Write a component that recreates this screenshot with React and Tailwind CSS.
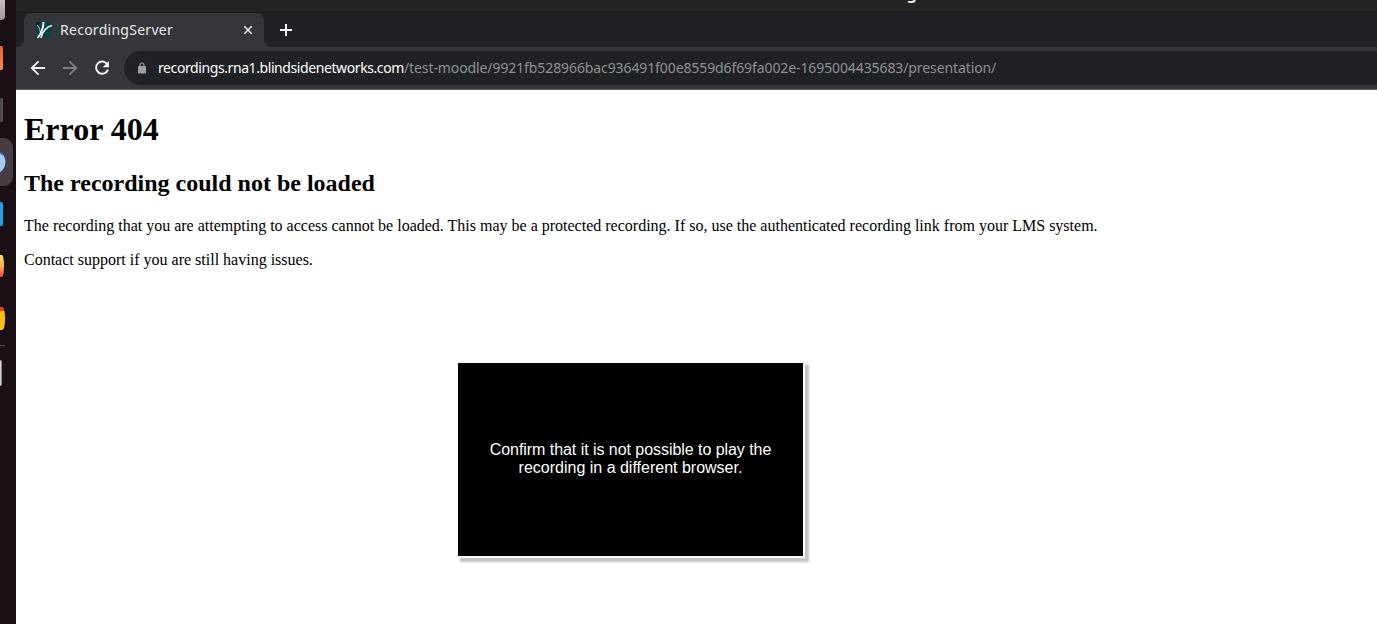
import React from 'react';

const dockItems = [
  { id: 'files', slot: 'h-[32px] items-start', icon: 'h-[20px] w-[5px] rounded-br-[4px] bg-gradient-to-b from-[#c4c0c2] to-[#9b989b]' },
  { id: 'software', slot: 'h-[52px] items-center', icon: 'h-[24px] w-[3px] rounded-r-[2px] bg-gradient-to-b from-[#e8622c] to-[#f58a55]' },
  { id: 'terminal', slot: 'h-[52px] items-center', icon: 'h-[24px] w-[3px] rounded-r-[2px] bg-[#484848] border-r border-[#5c5c5c]' },
  { id: 'browser', active: true },
  { id: 'editor', slot: 'h-[52px] items-center', icon: 'h-[24px] w-[3px] rounded-r-[2px] bg-[#22a0ec]' },
  { id: 'firefox', slot: 'h-[52px] items-center', icon: 'h-[22px] w-[4px] rounded-r-[100%] bg-gradient-to-b from-[#fbe04e] via-[#fdb04a] to-[#f0384f]' },
  { id: 'chrome', slot: 'h-[52px] items-center', icon: 'h-[23px] w-[5px] rounded-r-[100%] bg-[linear-gradient(#e53935_0_4px,#fdc00f_4px)]' },
];

const Dock = () => (
  <aside className="w-4 shrink-0 bg-[#1b0f16]">
    {dockItems.map((item) =>
      item.active ? (
        <div key={item.id} className="flex h-[52px] items-center">
          <div className="flex h-[48px] w-[13px] items-center rounded-r-[9px] bg-[#453d43]">
            <svg width="6" height="24" viewBox="0 0 6 24">
              <circle cx="-7" cy="12" r="12.4" fill="#a8c7fa" />
              <path d="M0 1.6 A12.4 12.4 0 0 1 3.6 6 L0 3.5Z" fill="#1a5fd0" />
            </svg>
          </div>
        </div>
      ) : (
        <div key={item.id} className={`flex ${item.slot}`}>
          <div className={item.icon} />
        </div>
      )
    )}
    <div className="mt-px h-px w-[5px] bg-[#544b51]" />
    <div className="mt-[14px] h-[26px] w-[2px] rounded-r-[2px] border-r border-[#8b9090] bg-[#cdd1d0]" />
  </aside>
);

const Favicon = () => (
  <svg width="16" height="16" viewBox="0 0 16 16" className="shrink-0">
    <rect width="16" height="16" fill="#0c4146" />
    <path d="M0 0H5L0 7Z" fill="#06292d" />
    <path d="M1.2 3C3 5 4.2 7 4.4 9.6" fill="none" stroke="#9fb8b8" strokeWidth="1.1" />
    <path d="M7.4 0C7.6 6 6 10 1.6 16" fill="none" stroke="#fff" strokeWidth="1.9" />
    <path d="M16 3.4C11 4.8 6.6 9 4.8 16" fill="none" stroke="#fff" strokeWidth="1.6" />
  </svg>
);

const TabStrip = () => (
  <div className="flex h-[34px] bg-[#202124]">
    <div className="flex w-2 items-end bg-[#35363a]">
      <div className="h-full w-2 rounded-br-[8px] bg-[#202124]" />
    </div>
    <div className="flex w-[240px] items-center rounded-t-[8px] bg-[#35363a] pr-[11px] pl-3">
      <Favicon />
      <span className="ml-2 grow font-['Noto_Sans'] text-[14px] leading-5 tracking-[0.27px] whitespace-nowrap text-[#e8eaed]">
        RecordingServer
      </span>
      <svg width="10" height="10" viewBox="0 0 10 10" className="shrink-0">
        <path d="M1.3 1.3L8.7 8.7M8.7 1.3L1.3 8.7" stroke="#e8eaed" strokeWidth="1.6" />
      </svg>
    </div>
    <div className="w-2 bg-[#35363a]">
      <div className="h-full w-2 rounded-bl-[8px] bg-[#202124]" />
    </div>
    <div className="flex w-7 items-center justify-center">
      <svg width="12" height="12" viewBox="0 0 12 12">
        <path d="M6 0V12M0 6H12" stroke="#fff" strokeWidth="2" />
      </svg>
    </div>
  </div>
);

const Toolbar = () => (
  <div className="flex h-[43px] items-center border-b border-[#5b5c60] bg-[#35363a]">
    <div className="flex w-[108px] shrink-0 items-center gap-3 pl-3">
      <svg width="20" height="20" viewBox="0 0 24 24" fill="#f1f3f4">
        <path d="M20.5 10.8H7.4l5.9-5.9L11.8 3.2 3 12l8.8 8.8 1.5-1.7-5.9-5.9h13.1z" />
      </svg>
      <svg width="20" height="20" viewBox="0 0 24 24" fill="#7e8084">
        <path d="M3.5 10.8h13.1l-5.9-5.9 1.5-1.7L21 12l-8.8 8.8-1.5-1.7 5.9-5.9H3.5z" />
      </svg>
      <svg width="20" height="20" viewBox="0 0 24 24" fill="none" stroke="#f1f3f4" strokeWidth="2.4">
        <path d="M18.3 7.2A7.4 7.4 0 1 0 19.2 14" />
        <path d="M20.3 3.5V11H12.8Z" fill="#f1f3f4" stroke="none" />
      </svg>
    </div>
    <div className="flex h-[34px] grow items-center rounded-l-full bg-[#202124] pl-[14px]">
      <svg width="8" height="12" viewBox="0 0 8 12" className="shrink-0">
        <path d="M2 5V3a2 2 0 0 1 4 0V5" fill="none" stroke="#9aa0a6" strokeWidth="1.2" />
        <rect y="4" width="8" height="7.5" rx="0.8" fill="#9aa0a6" />
      </svg>
      <div className="ml-3 flex font-['Noto_Sans'] text-[14px] leading-5 whitespace-nowrap">
        <span className="w-[246px] tracking-[-0.41px] text-white">recordings.rna1.blindsidenetworks.com</span>
        <span className="tracking-[-0.1px] text-[#8f9194]">
          /test-moodle/9921fb528966bac936491f00e8559d6f69fa002e-1695004435683/presentation/
        </span>
      </div>
    </div>
  </div>
);

const ErrorPage = () => (
  <main className="grow bg-white px-2 pt-[21px] font-['Liberation_Serif'] text-black">
    <h1 className="text-[32px] leading-[37px] font-bold">Error 404</h1>
    <h2 className="mt-[22px] text-[24px] leading-[27px] font-bold">The recording could not be loaded</h2>
    <p className="mt-5 text-base leading-[18px]">
      The recording that you are attempting to access cannot be loaded. This may be a protected recording. If so, use
      the authenticated recording link from your LMS system.
    </p>
    <p className="mt-4 text-base leading-[18px]">Contact support if you are still having issues.</p>

    <div className="mt-[94px] ml-[434px] h-[195px] w-[347px] border-r-2 border-b-2 border-white bg-black shadow-[3px_3px_2px_1px_#c4c4c4]">
      <p className="pt-[78px] text-center font-['Liberation_Sans'] text-[16px] leading-[18px] text-white">
        <span className="tracking-[-0.05px]">Confirm that it is not possible to play the</span>
        <br />
        recording in a different browser.
      </p>
    </div>
  </main>
);

const App = () => {
  return (
    <div className="flex h-[624px] w-[1377px] overflow-hidden bg-white">
      <Dock />
      <div className="flex min-w-0 grow flex-col">
        <header className="flex h-[13px] items-start overflow-hidden border-b border-[#191919] bg-[#232323] pl-[891px]">
          <span className="-mt-[15px] font-['Noto_Sans'] text-[15px] leading-[18px] font-bold text-white">g</span>
        </header>
        <TabStrip />
        <Toolbar />
        <ErrorPage />
      </div>
    </div>
  );
};

export default App;
